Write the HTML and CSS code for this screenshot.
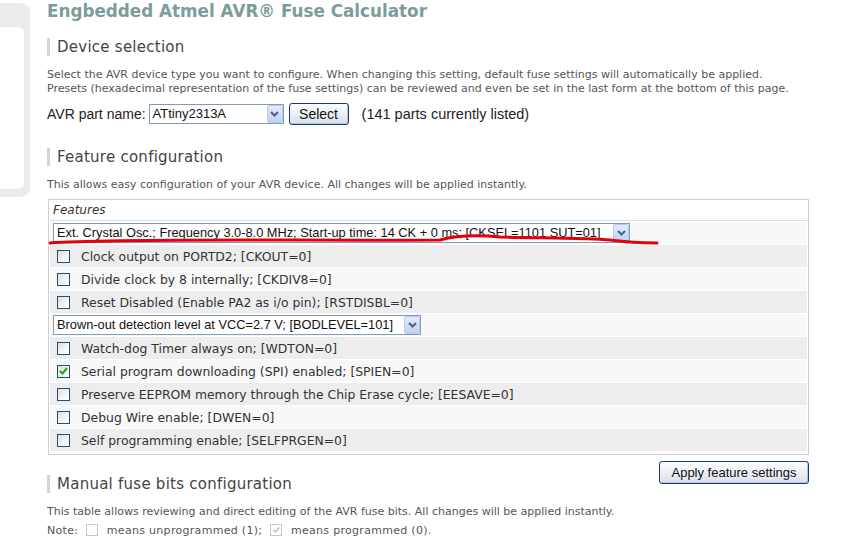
FILE: index.html
```html
<!DOCTYPE html>
<html>
<head>
<meta charset="utf-8">
<link rel="stylesheet" href="styles.css">
</head>
<body>
<div class="page">
  <div class="sidebar"><div class="sidebar-inner"></div></div>
  <div class="main">
    <h1 class="title">Engbedded Atmel AVR® Fuse Calculator</h1>

    <h2 class="section">Device selection</h2>
    <p class="desc">Select the AVR device type you want to configure. When changing this setting, default fuse settings will automatically be applied.<br>Presets (hexadecimal representation of the fuse settings) can be reviewed and even be set in the last form at the bottom of this page.</p>

    <div class="part-row">
      <span class="label">AVR part name:</span>
      <div class="select part-select"><span class="sel-text">ATtiny2313A</span><span class="sel-arrow"><svg width="9" height="6" viewBox="0 0 9 6"><path d="M1 1 L4.5 4.5 L8 1" fill="none" stroke="#4d6185" stroke-width="2"/></svg></span></div>
      <button class="btn">Select</button>
      <span class="count">(141 parts currently listed)</span>
    </div>

    <h2 class="section s2">Feature configuration</h2>
    <p class="desc">This allows easy configuration of your AVR device. All changes will be applied instantly.</p>

    <div class="table">
      <div class="thead">Features</div>
      <div class="row"><div class="select wide"><span class="sel-text">Ext. Crystal Osc.; Frequency 3.0-8.0 MHz; Start-up time: 14 CK + 0 ms; [CKSEL=1101 SUT=01]</span><span class="sel-arrow"><svg width="9" height="6" viewBox="0 0 9 6"><path d="M1 1 L4.5 4.5 L8 1" fill="none" stroke="#4d6185" stroke-width="2"/></svg></span></div></div>
      <div class="row"><span class="cb"></span><span class="opt">Clock output on PORTD2; [CKOUT=0]</span></div>
      <div class="row"><span class="cb"></span><span class="opt">Divide clock by 8 internally; [CKDIV8=0]</span></div>
      <div class="row"><span class="cb"></span><span class="opt">Reset Disabled (Enable PA2 as i/o pin); [RSTDISBL=0]</span></div>
      <div class="row"><div class="select bod"><span class="sel-text">Brown-out detection level at VCC=2.7 V; [BODLEVEL=101]</span><span class="sel-arrow"><svg width="9" height="6" viewBox="0 0 9 6"><path d="M1 1 L4.5 4.5 L8 1" fill="none" stroke="#4d6185" stroke-width="2"/></svg></span></div></div>
      <div class="row"><span class="cb"></span><span class="opt">Watch-dog Timer always on; [WDTON=0]</span></div>
      <div class="row"><span class="cb checked"><svg width="9" height="8" viewBox="0 0 9 8"><path d="M1 4 L3.5 6.5 L8 1" fill="none" stroke="#21a121" stroke-width="2"/></svg></span><span class="opt">Serial program downloading (SPI) enabled; [SPIEN=0]</span></div>
      <div class="row"><span class="cb"></span><span class="opt">Preserve EEPROM memory through the Chip Erase cycle; [EESAVE=0]</span></div>
      <div class="row"><span class="cb"></span><span class="opt">Debug Wire enable; [DWEN=0]</span></div>
      <div class="row"><span class="cb"></span><span class="opt">Self programming enable; [SELFPRGEN=0]</span></div>
    </div>

    <div class="apply-wrap"><button class="btn apply">Apply feature settings</button></div>
    <h2 class="section s3">Manual fuse bits configuration</h2>
    <p class="desc d3">This table allows reviewing and direct editing of the AVR fuse bits. All changes will be applied instantly.</p>
    <p class="desc note">Note: <span class="mini"></span> means unprogrammed (1); <span class="mini"><svg width="7" height="6" viewBox="0 0 7 6"><path d="M0.5 3 L2.5 5 L6.5 0.5" fill="none" stroke="#b8b8b8" stroke-width="1.2"/></svg></span> means programmed (0).</p>
  </div>
</div>
<svg class="annot" width="841" height="541" viewBox="0 0 841 541"><path d="M50 243 C 120 238 300 241 440 240 C 455 236 478 235 500 237 C 540 238 590 238 610 240 C 625 242 640 243 657 243" fill="none" stroke="#e3000b" stroke-width="3" stroke-linecap="round"/></svg>
</body>
</html>
```
FILE: styles.css
```css
html, body { margin: 0; padding: 0; background: #fff; }
body { font-family: "DejaVu Sans", Verdana, sans-serif; color: #333; position: relative; width: 841px; height: 541px; overflow: hidden; }
.page { display: flex; align-items: flex-start; }
.sidebar { width: 30px; height: 194px; margin-top: 3px; background: #ececec; border-radius: 0 9px 9px 0; padding: 24px 6px 8px 0; box-sizing: border-box; flex: none; }
.sidebar-inner { background: #fff; height: 100%; border-radius: 0 6px 6px 0; }
.main { margin-left: 17px; width: 762px; }
.title { margin: 0; font-size: 16.8px; font-weight: bold; color: #7c9c9c; line-height: 22px; }
.section { margin: 16px 0 0 0; font-size: 15px; letter-spacing: 0.25px; font-weight: normal; color: #444; line-height: 18px; border-left: 3px solid #d4d4d4; padding-left: 7px; }
.s2 { margin-top: 23px; }
.s3 { margin-top: 20px; }
.desc { margin: 12px 0 0 0; font-size: 11px; line-height: 14px; color: #555; }
.part-row { display: flex; align-items: center; margin-top: 7px; font-family: "Liberation Sans", Arial, sans-serif; font-size: 14px; color: #222; height: 22px; }
.label { margin-right: 3px; }
.select { display: flex; align-items: center; background: #fff; border: 1px solid #7f9db9; height: 18px; box-sizing: border-box; font-family: "Liberation Sans", Arial, sans-serif; font-size: 12.8px; color: #111; }
.sel-text { flex: 1; padding-left: 3px; white-space: nowrap; overflow: hidden; line-height: 16px; margin-top: -1px; }
.sel-arrow { width: 16px; height: 16px; margin: 0 0 0 2px; box-sizing: border-box; border: 1px solid #b9c9ef; background: linear-gradient(#e3ebfb, #c0d0f4); display: flex; align-items: center; justify-content: center; border-radius: 2px; }
.part-select { width: 135px; height: 20px; font-size: 13px; }
.part-select .sel-arrow { height: 18px; }
.btn { font-family: "Liberation Sans", Arial, sans-serif; font-size: 13px; color: #111; border: 1px solid #1c3b6e; border-radius: 3px; background: linear-gradient(#fefefe 0%, #f0f2f6 40%, #d8e0ec 100%); padding: 0; height: 22px; box-shadow: inset -1px -1px 0 #b5c4de; }
.part-row .btn { width: 60px; margin-left: 5px; font-size: 14px; }
.count { margin-left: 13px; font-size: 14.5px; }
.table { margin-top: 7px; border: 1px solid #cfcfcf; margin-left: 1px; width: 761px; box-sizing: border-box; padding: 0 1px 3px 1px; }
.thead { height: 20px; line-height: 20px; font-size: 12px; font-style: italic; color: #333; padding-left: 3px; border-bottom: 1px solid #ddd; }
.row { height: 22px; display: flex; align-items: center; margin-top: 1px; background: #f8f8f8; padding-left: 3px; }
.row:nth-child(odd) { background: #ededed; }
.select.wide { width: 577px; height: 20px; }
.select.wide .sel-arrow { height: 18px; }
.select.bod { width: 368px; height: 20px; }
.select.bod .sel-arrow { height: 18px; }
.cb { width: 13px; height: 13px; box-sizing: border-box; border: 1px solid #1d5180; background: linear-gradient(135deg, #dcdcd7 0%, #f6f6f4 60%, #fff 100%); margin-left: 4px; display: flex; align-items: center; justify-content: center; flex: none; }
.opt { margin-left: 11px; font-size: 12.4px; color: #333; white-space: nowrap; }
.apply-wrap { float: right; margin-top: 6px; margin-right: 0; }
.btn.apply { width: 150px; height: 23px; }
.d3 { margin-top: 12px; }
.note { margin-top: 5px; letter-spacing: 0.3px; }
.mini { display: inline-block; width: 12px; height: 12px; box-sizing: border-box; border: 1px solid #c8c8c8; background: #fff; vertical-align: -2px; margin: 0 5px 0 4px; position: relative; }
.mini svg { position: absolute; left: 2px; top: 2px; }
.annot { position: absolute; left: 0; top: 0; pointer-events: none; }
```
